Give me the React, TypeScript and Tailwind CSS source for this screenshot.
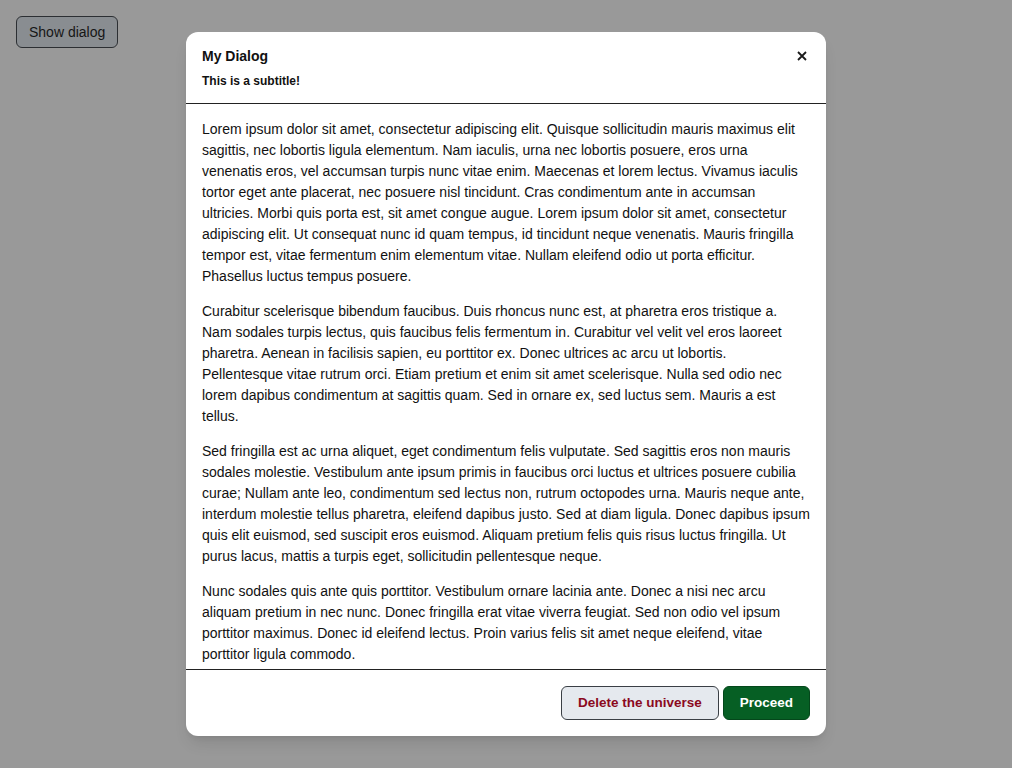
import React from "react";

const paras = [
  "Lorem ipsum dolor sit amet, consectetur adipiscing elit. Quisque sollicitudin mauris maximus elit sagittis, nec lobortis ligula elementum. Nam iaculis, urna nec lobortis posuere, eros urna venenatis eros, vel accumsan turpis nunc vitae enim. Maecenas et lorem lectus. Vivamus iaculis tortor eget ante placerat, nec posuere nisl tincidunt. Cras condimentum ante in accumsan ultricies. Morbi quis porta est, sit amet congue augue. Lorem ipsum dolor sit amet, consectetur adipiscing elit. Ut consequat nunc id quam tempus, id tincidunt neque venenatis. Mauris fringilla tempor est, vitae fermentum enim elementum vitae. Nullam eleifend odio ut porta efficitur. Phasellus luctus tempus posuere.",
  "Curabitur scelerisque bibendum faucibus. Duis rhoncus nunc est, at pharetra eros tristique a. Nam sodales turpis lectus, quis faucibus felis fermentum in. Curabitur vel velit vel eros laoreet pharetra. Aenean in facilisis sapien, eu porttitor ex. Donec ultrices ac arcu ut lobortis. Pellentesque vitae rutrum orci. Etiam pretium et enim sit amet scelerisque. Nulla sed odio nec lorem dapibus condimentum at sagittis quam. Sed in ornare ex, sed luctus sem. Mauris a est tellus.",
  "Sed fringilla est ac urna aliquet, eget condimentum felis vulputate. Sed sagittis eros non mauris sodales molestie. Vestibulum ante ipsum primis in faucibus orci luctus et ultrices posuere cubilia curae; Nullam ante leo, condimentum sed lectus non, rutrum octopodes urna. Mauris neque ante, interdum molestie tellus pharetra, eleifend dapibus justo. Sed at diam ligula. Donec dapibus ipsum quis elit euismod, sed suscipit eros euismod. Aliquam pretium felis quis risus luctus fringilla. Ut purus lacus, mattis a turpis eget, sollicitudin pellentesque neque.",
  "Nunc sodales quis ante quis porttitor. Vestibulum ornare lacinia ante. Donec a nisi nec arcu aliquam pretium in nec nunc. Donec fringilla erat vitae viverra feugiat. Sed non odio vel ipsum porttitor maximus. Donec id eleifend lectus. Proin varius felis sit amet neque eleifend, vitae porttitor ligula commodo.",
];

export default function App() {
  return (
    <div
      className="relative w-[1012px] h-[768px] bg-[#999999] overflow-hidden"
      style={{ fontFamily: '"Liberation Sans", Arial, sans-serif' }}
    >
      <div className="p-4">
        <button className="h-8 px-3 rounded-md border border-[#2c2f33] bg-[#898d91] text-[#161616] text-[14px] leading-4">
          Show dialog
        </button>
      </div>
      <div className="absolute left-[186px] top-[32px] w-[640px] h-[704px] bg-white rounded-xl shadow-lg flex flex-col overflow-hidden">
        <div className="relative px-4 pt-4 pb-[14px] border-b border-[#222]">
          <div className="text-[14px] leading-4 font-bold text-[#111]">My Dialog</div>
          <div className="mt-[10px] text-[12px] leading-[15px] font-bold text-[#111]">This is a subtitle!</div>
          <button className="absolute right-[19px] top-[18px] w-[10px] h-[12px] flex items-center justify-center">
            <svg width="10" height="10" viewBox="0 0 10 10">
              <path d="M1 1 L9 9 M9 1 L1 9" stroke="#1a1a1a" strokeWidth="1.8" strokeLinecap="butt" />
            </svg>
          </button>
        </div>
        <div className="flex-1 overflow-hidden px-4 pt-[15px] text-[14px] leading-[21px] text-[#111]">
          {paras.map((p, i) => (
            <p key={i} className="mb-[14px]">
              {p}
            </p>
          ))}
        </div>
        <div className="border-t border-[#222] px-4 pt-4 pb-4 flex justify-end gap-[4px]">
          <button className="h-[34px] px-4 rounded-md border border-[#3a3f45] bg-[#e5e9ee] text-[#8b0a1e] text-[13.5px] leading-4 font-bold">
            Delete the universe
          </button>
          <button className="h-[34px] px-4 rounded-md border border-[#04471b] bg-[#065f24] text-white text-[13.5px] leading-4 font-bold">
            Proceed
          </button>
        </div>
      </div>
    </div>
  );
}
